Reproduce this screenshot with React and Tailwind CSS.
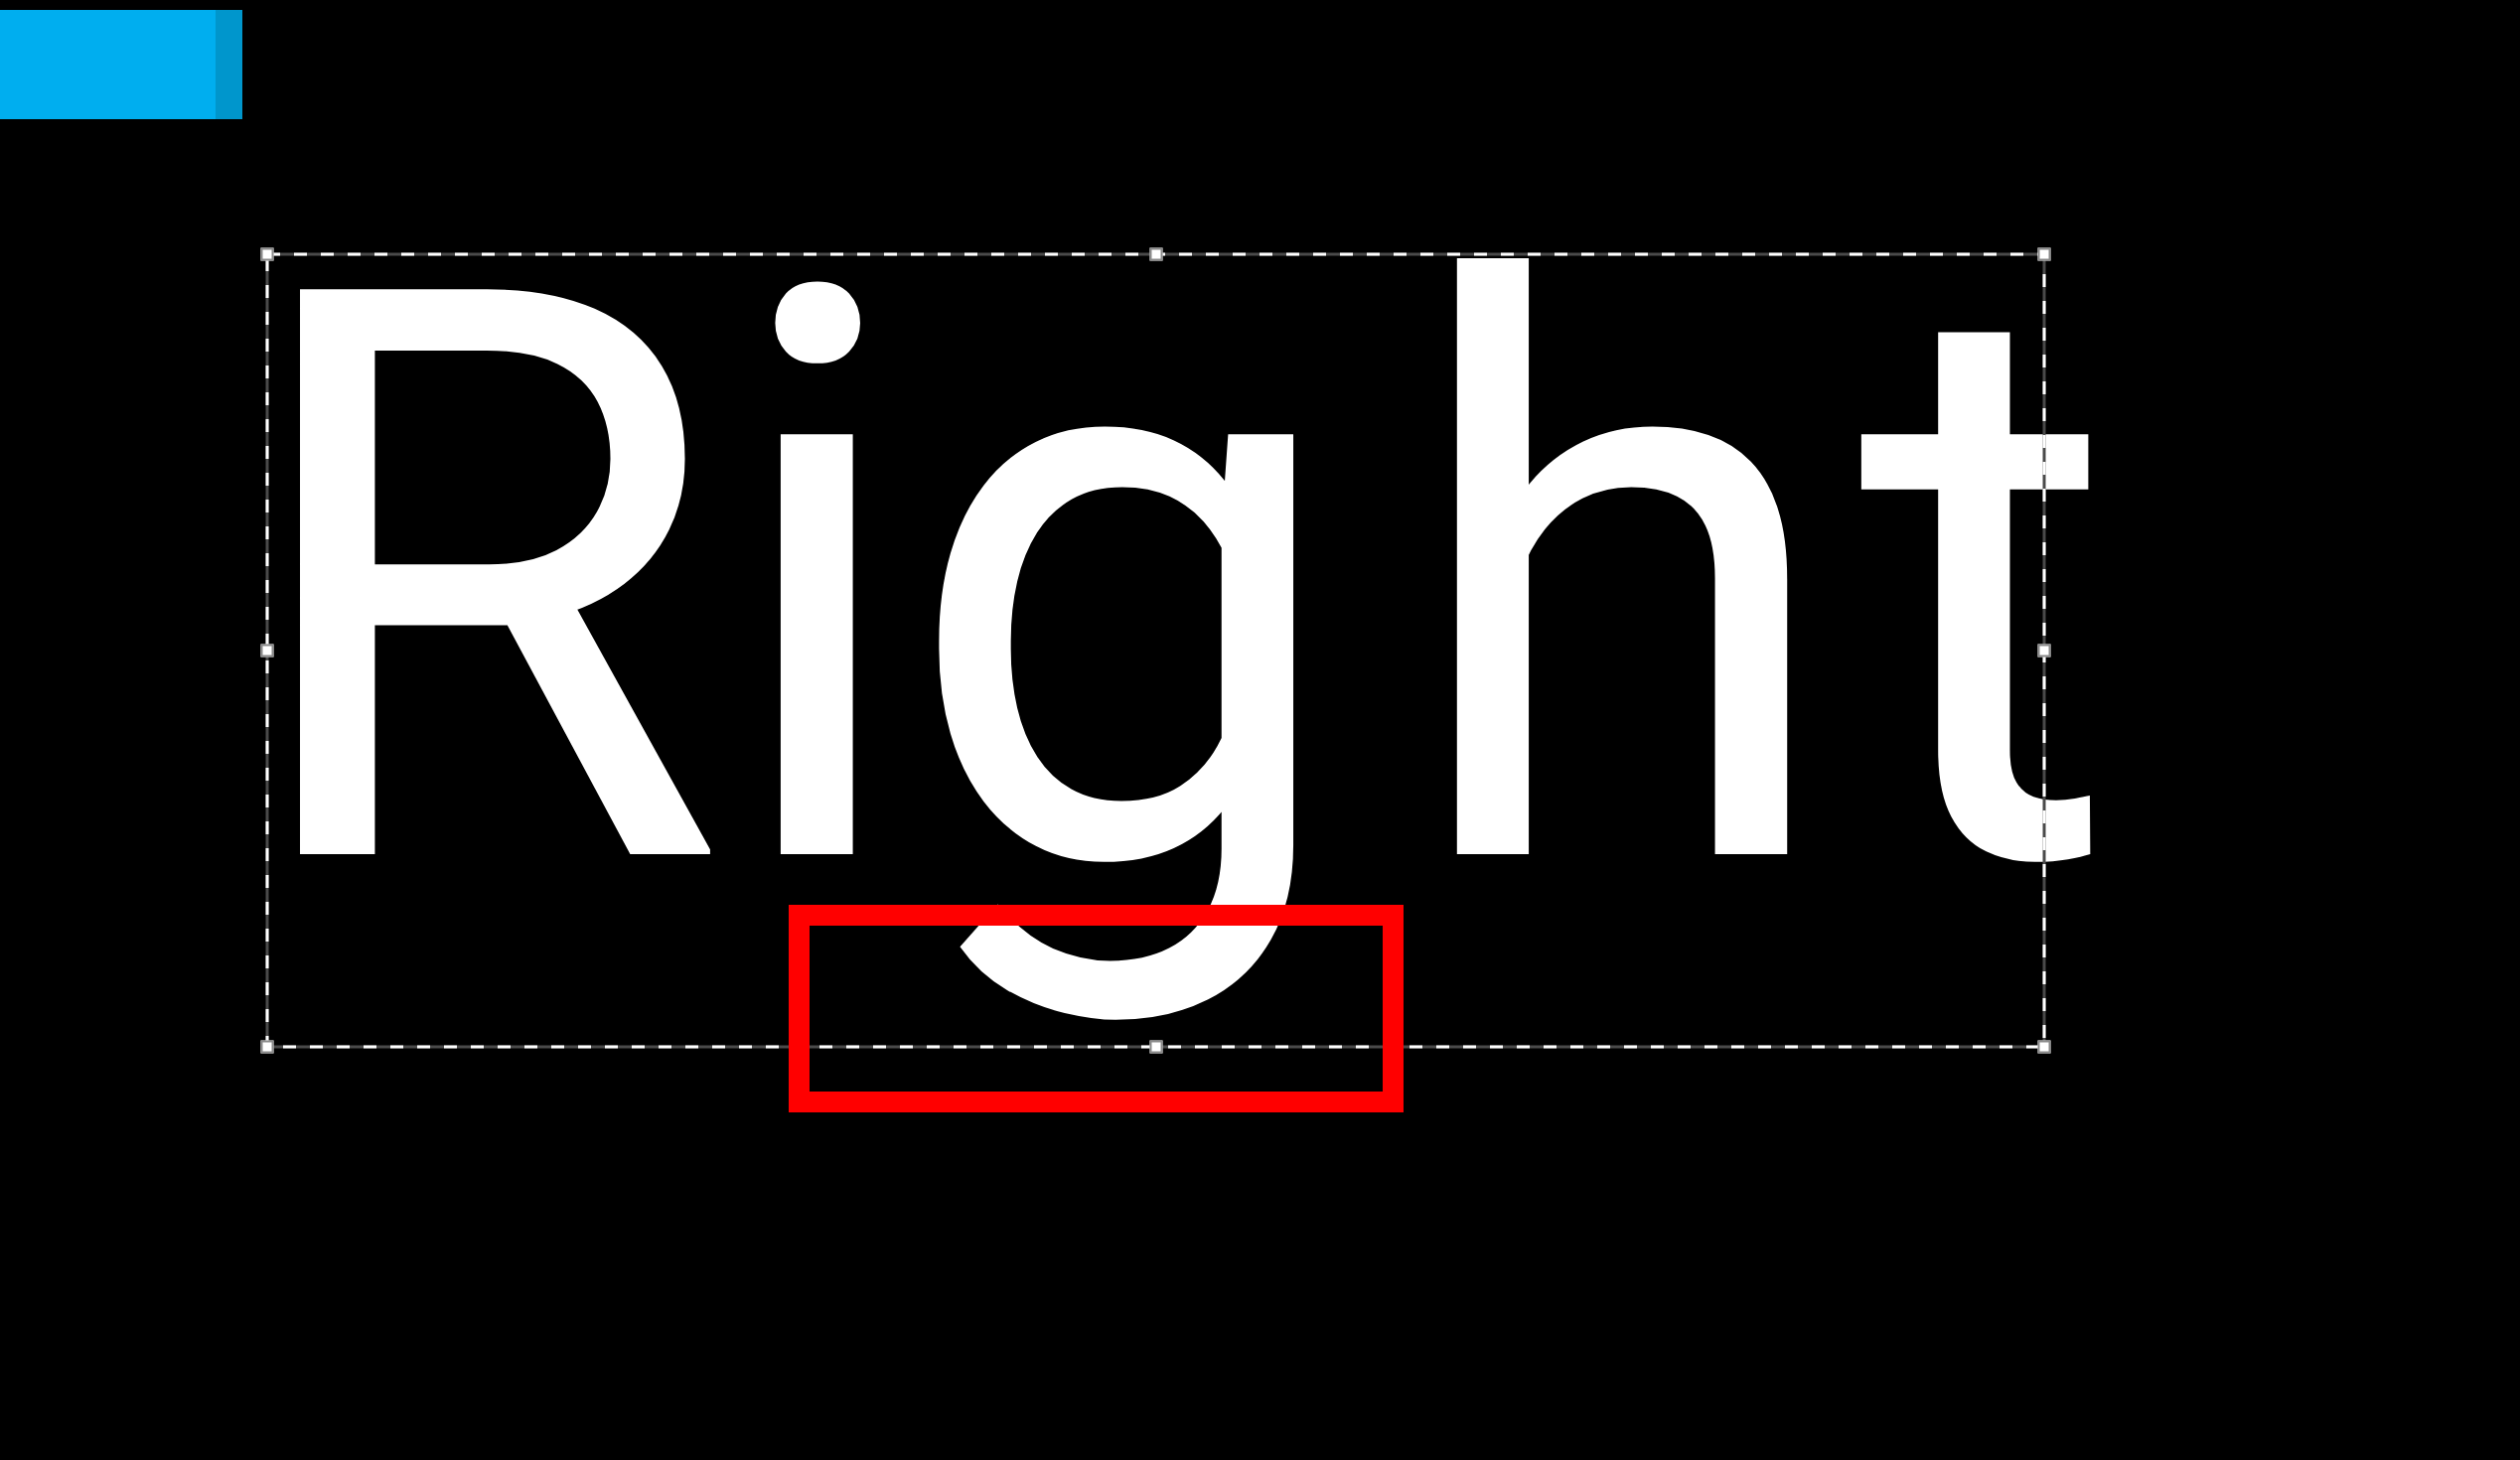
import React from 'react';

const Handle = ({ pos }) => (
  <div className={`absolute w-[13px] h-[13px] -translate-x-1/2 -translate-y-1/2 bg-white border-2 border-[#8a8a8a] ${pos}`} />
);

const SelectionBox = () => (
  <div className="absolute left-[269px] top-[256px] w-[1789px] h-[798px]">
    <svg className="absolute inset-0 w-full h-full overflow-visible" viewBox="0 0 1789 798" preserveAspectRatio="none">
      <rect x="0" y="0" width="1789" height="798" fill="none" stroke="#4a4a4a" strokeWidth="3" />
      <rect x="0" y="0" width="1789" height="798" fill="none" stroke="#ffffff" strokeWidth="3" strokeDasharray="13 14" />
    </svg>
    <Handle pos="left-0 top-0" />
    <Handle pos="left-1/2 top-0" />
    <Handle pos="left-full top-0" />
    <Handle pos="left-0 top-1/2" />
    <Handle pos="left-full top-1/2" />
    <Handle pos="left-0 top-full" />
    <Handle pos="left-1/2 top-full" />
    <Handle pos="left-full top-full" />
  </div>
);

export default function App() {
  return (
    <div className="relative w-[2537px] h-[1470px] bg-black overflow-hidden">
      <div className="pt-[10px]">
        <div className="flex w-[244px] h-[110px]">
          <div className="flex-1 bg-[#00aeef]" />
          <div className="w-[27px] bg-[#0096cc]" />
        </div>
      </div>

      {/* letter spans nudge the spacing toward the original face */}
      <div className="pl-[236px] pt-[67px]">
        <span className="text-[800px] leading-none text-white font-normal [font-family:Roboto,sans-serif]">
          R<span className="ml-[-4px]">i</span><span className="ml-[-12px]">g</span><span className="ml-[55px]">h</span><span className="ml-[18px]">t</span>
        </span>
      </div>

      <SelectionBox />

      <div className="absolute left-[794px] top-[911px] w-[619px] h-[209px] border-[21px] border-[#ff0000]" />
    </div>
  );
}
